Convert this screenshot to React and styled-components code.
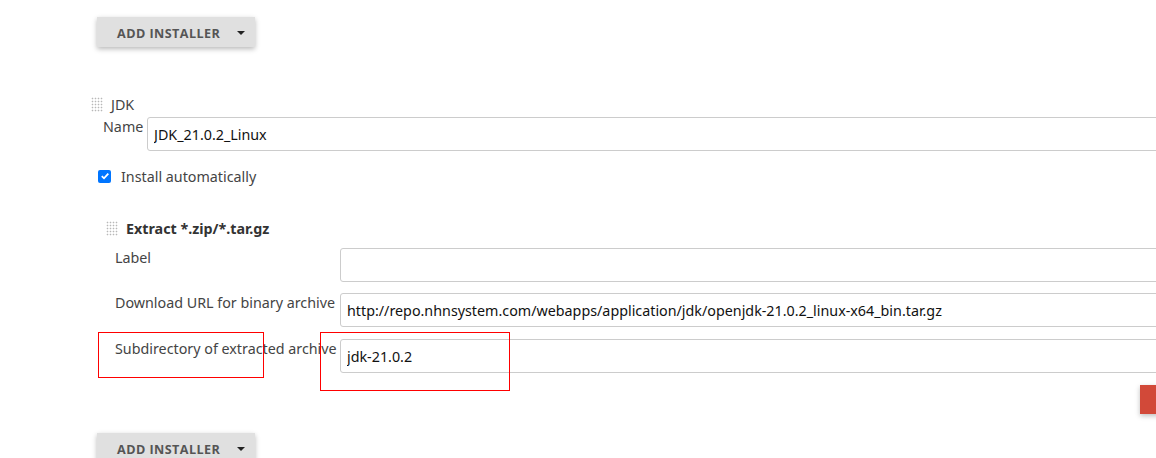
import React from "react";
import styled, { createGlobalStyle } from "styled-components";

const Global = createGlobalStyle`
  html, body { margin: 0; padding: 0; background: #fff; overflow: hidden; }
  body { font-family: "Noto Sans", "Liberation Sans", sans-serif; color: #333; }
`;

const Page = styled.div`
  position: relative;
  width: 1156px;
  height: 458px;
  overflow: hidden;
  padding-left: 97px;
  box-sizing: border-box;
`;

const Inner = styled.div`
  width: 1100px;
  display: flex;
  flex-direction: column;
`;

const AddButton = styled.button`
  display: flex;
  align-items: center;
  width: 158px;
  height: 30px;
  margin-top: ${(p) => p.$top}px;
  padding: 2px 0 0 20px;
  border: none;
  background: #e0e0e0;
  box-shadow: 0 2px 5px rgba(0, 0, 0, 0.28);
  font-family: "Open Sans", "Noto Sans", sans-serif;
  font-weight: 700;
  font-size: 12.6px;
  letter-spacing: 0.45px;
  color: #555;
  cursor: pointer;
  box-sizing: border-box;
`;

const Caret = styled.span`
  margin-left: 17px;
  margin-top: -1px;
  width: 0;
  height: 0;
  border-left: 4px solid transparent;
  border-right: 4px solid transparent;
  border-top: 4px solid #222;
`;

const Handle = styled.span`
  display: inline-block;
  width: 12px;
  height: 15px;
  background-image: radial-gradient(circle, #b8b8b8 0.85px, transparent 1.05px);
  background-size: 3px 3px;
  margin-right: ${(p) => p.$gap}px;
`;

const SectionHead = styled.div`
  display: flex;
  align-items: center;
  margin-top: ${(p) => p.$top}px;
  margin-left: ${(p) => p.$left}px;
  font-size: 14.3px;
  font-weight: ${(p) => (p.$bold ? 700 : 400)};
  color: ${(p) => (p.$bold ? "#333" : "#444")};
  height: 16px;
`;

const FieldRow = styled.div`
  display: flex;
  align-items: flex-start;
  margin-top: ${(p) => p.$top}px;
  margin-left: ${(p) => p.$left}px;
`;

const FieldLabel = styled.label`
  width: ${(p) => p.$w}px;
  flex: none;
  font-size: 14.3px;
  color: #444;
  white-space: nowrap;
`;

const TextInput = styled.input`
  flex: 1;
  height: 34px;
  box-sizing: border-box;
  border: 1px solid #ccc;
  border-radius: 3px;
  padding: 0 6px;
  font-family: "Noto Sans", "Liberation Sans", sans-serif;
  font-size: 14.3px;
  color: #111;
  background: #fff;
  outline: none;
`;

const CheckRow = styled.label`
  display: flex;
  align-items: center;
  margin-top: 18px;
  margin-left: 1px;
  font-size: 14.3px;
  color: #444;
  height: 14px;
`;

const Box = styled.span`
  width: 13px;
  height: 13px;
  border-radius: 2px;
  background: #0075ff;
  display: flex;
  align-items: center;
  justify-content: center;
  margin-right: 10px;
`;

const DeleteRow = styled.div`
  display: flex;
  justify-content: flex-end;
  margin-top: 12px;
`;

const DeleteButton = styled.div`
  width: 60px;
  height: 29px;
  background: #d24939;
  box-shadow: 0 2px 5px rgba(0, 0, 0, 0.25);
  margin-right: -3px;
`;

const Annot = styled.div`
  position: absolute;
  border: 1px solid #ff0000;
  left: ${(p) => p.$x}px;
  top: ${(p) => p.$y}px;
  width: ${(p) => p.$w}px;
  height: ${(p) => p.$h}px;
  box-sizing: border-box;
  pointer-events: none;
`;

export default function App() {
  return (
    <>
      <Global />
      <Page>
        <Inner>
          <AddButton $top={17}>
            ADD INSTALLER
            <Caret />
          </AddButton>

          <SectionHead $top={49} $left={-6}>
            <Handle $gap={8} />
            JDK
          </SectionHead>

          <FieldRow $top={5} $left={6}>
            <FieldLabel $w={44}>Name</FieldLabel>
            <TextInput defaultValue="JDK_21.0.2_Linux" />
          </FieldRow>

          <CheckRow>
            <Box>
              <svg width="10" height="10" viewBox="0 0 10 10">
                <path d="M1.8 5.2 L4 7.3 L8.3 2.6" stroke="#fff" strokeWidth="1.8" fill="none" />
              </svg>
            </Box>
            Install automatically
          </CheckRow>

          <SectionHead $top={37} $left={9} $bold>
            <Handle $gap={8} />
            Extract *.zip/*.tar.gz
          </SectionHead>

          <FieldRow $top={12} $left={18}>
            <FieldLabel $w={225}>Label</FieldLabel>
            <TextInput defaultValue="" />
          </FieldRow>

          <FieldRow $top={11} $left={18}>
            <FieldLabel $w={225}>Download URL for binary archive</FieldLabel>
            <TextInput defaultValue="http://repo.nhnsystem.com/webapps/application/jdk/openjdk-21.0.2_linux-x64_bin.tar.gz" />
          </FieldRow>

          <FieldRow $top={12} $left={18}>
            <FieldLabel $w={225}>Subdirectory of extracted archive</FieldLabel>
            <TextInput defaultValue="jdk-21.0.2" />
          </FieldRow>

          <DeleteRow>
            <DeleteButton />
          </DeleteRow>

          <AddButton $top={19}>
            ADD INSTALLER
            <Caret />
          </AddButton>
        </Inner>
        <Annot $x={98} $y={332} $w={166} $h={46} />
        <Annot $x={320} $y={332} $w={190} $h={59} />
      </Page>
    </>
  );
}
